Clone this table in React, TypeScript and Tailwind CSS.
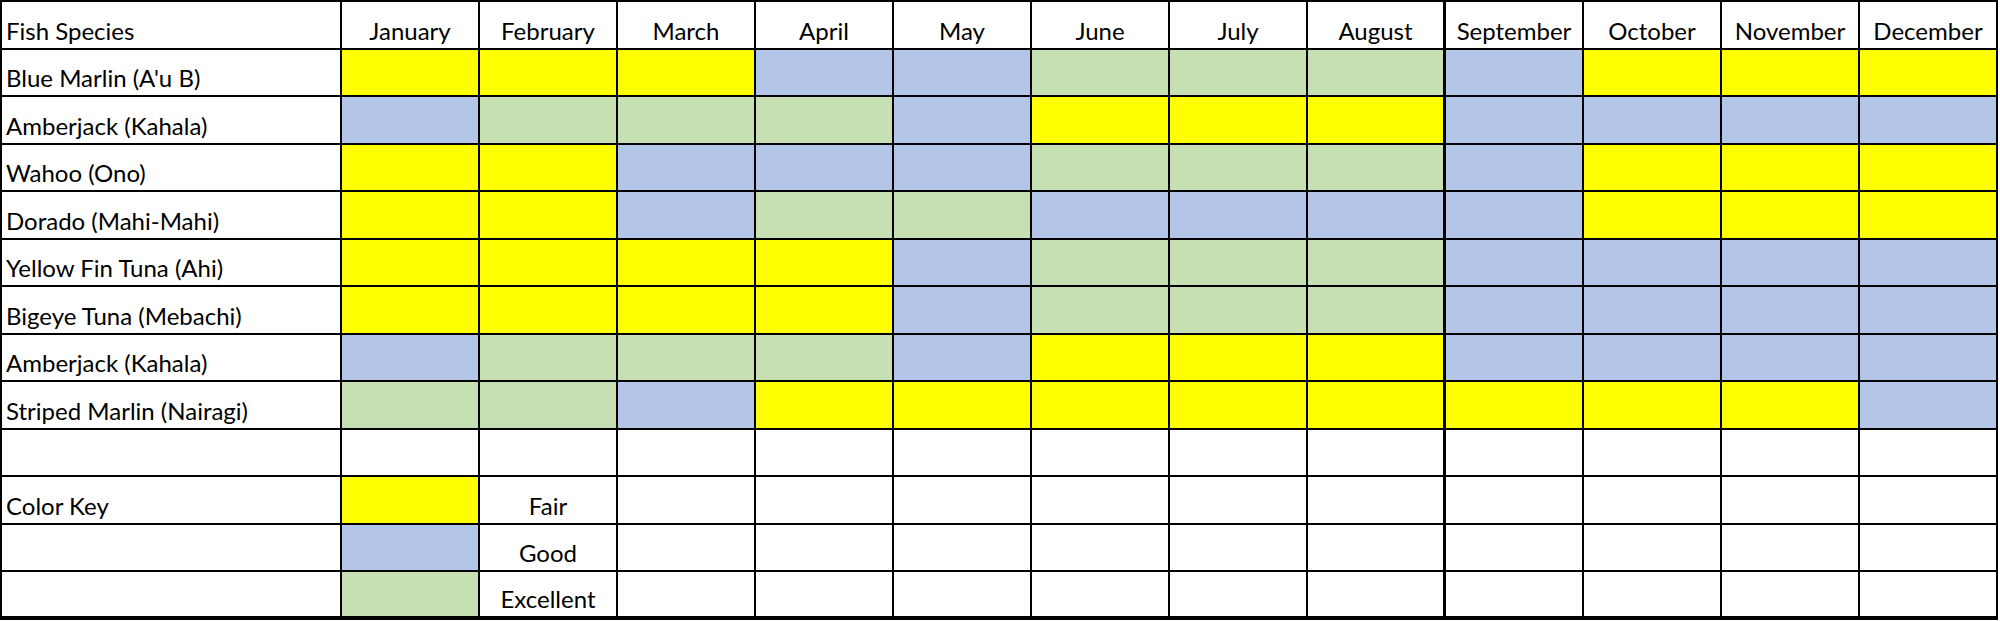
import React from 'react'

type C = 'Y' | 'B' | 'G' | ''

const months = [
  'January', 'February', 'March', 'April', 'May', 'June',
  'July', 'August', 'September', 'October', 'November', 'December',
]

const fill: Record<string, string> = {
  Y: 'bg-[#ffff00]',
  B: 'bg-[#b4c6e7]',
  G: 'bg-[#c6e0b4]',
  '': 'bg-white',
}

const species: { name: string; cells: string }[] = [
  { name: "Blue Marlin (A'u B)", cells: 'YYYBBGGGBYYY' },
  { name: 'Amberjack (Kahala)', cells: 'BGGGBYYYBBBB' },
  { name: 'Wahoo (Ono)', cells: 'YYBBBGGGBYYY' },
  { name: 'Dorado (Mahi-Mahi)', cells: 'YYBGGBBBBYYY' },
  { name: 'Yellow Fin Tuna (Ahi)', cells: 'YYYYBGGGBBBB' },
  { name: 'Bigeye Tuna (Mebachi)', cells: 'YYYYBGGGBBBB' },
  { name: 'Amberjack (Kahala)', cells: 'BGGGBYYYBBBB' },
  { name: 'Striped Marlin (Nairagi)', cells: 'GGBYYYYYYYYB' },
]

// legend rows: label in first col, colour in Jan, text in Feb
const keyRows: { label: string; color: C; text: string }[] = [
  { label: '', color: '', text: '' },
  { label: 'Color Key', color: 'Y', text: 'Fair' },
  { label: '', color: 'B', text: 'Good' },
  { label: '', color: 'G', text: 'Excellent' },
]

function Cell({
  children,
  color = '',
  col,
  last,
  center,
}: {
  children?: React.ReactNode
  color?: string
  col: number
  last?: boolean
  center?: boolean
}) {
  return (
    <div
      className={`h-[47.5px] flex items-end pb-[5px] leading-none text-[24px] whitespace-nowrap border-black ${
        last ? 'border-b-4' : 'border-b-2'
      } ${col === 8 ? 'border-r-[3px]' : 'border-r-2'} ${center ? 'justify-center' : 'pl-1'} ${fill[color]}`}
    >
      {children}
    </div>
  )
}

export default function App() {
  return (
    <div className="w-[2000px] h-[621px] bg-white overflow-hidden text-black font-['Lato','Liberation_Sans',sans-serif]">
      <div className="grid grid-cols-[340px_repeat(12,138px)] border-l-2 border-t-2 border-black w-max">
        <Cell col={0}>Fish Species</Cell>
        {months.map((m, i) => (
          <Cell key={m} col={i + 1} center>
            {m}
          </Cell>
        ))}

        {species.map((s, r) => (
          <React.Fragment key={r}>
            <Cell col={0}>{s.name}</Cell>
            {s.cells.split('').map((c, i) => (
              <Cell key={i} col={i + 1} color={c} />
            ))}
          </React.Fragment>
        ))}

        {keyRows.map((k, r) => {
          const last = r === keyRows.length - 1
          return (
            <React.Fragment key={'k' + r}>
              <Cell col={0} last={last}>{k.label}</Cell>
              <Cell col={1} color={k.color} last={last} />
              <Cell col={2} last={last} center>{k.text}</Cell>
              {months.slice(2).map((m, i) => (
                <Cell key={m} col={i + 3} last={last} />
              ))}
            </React.Fragment>
          )
        })}
      </div>
    </div>
  )
}
